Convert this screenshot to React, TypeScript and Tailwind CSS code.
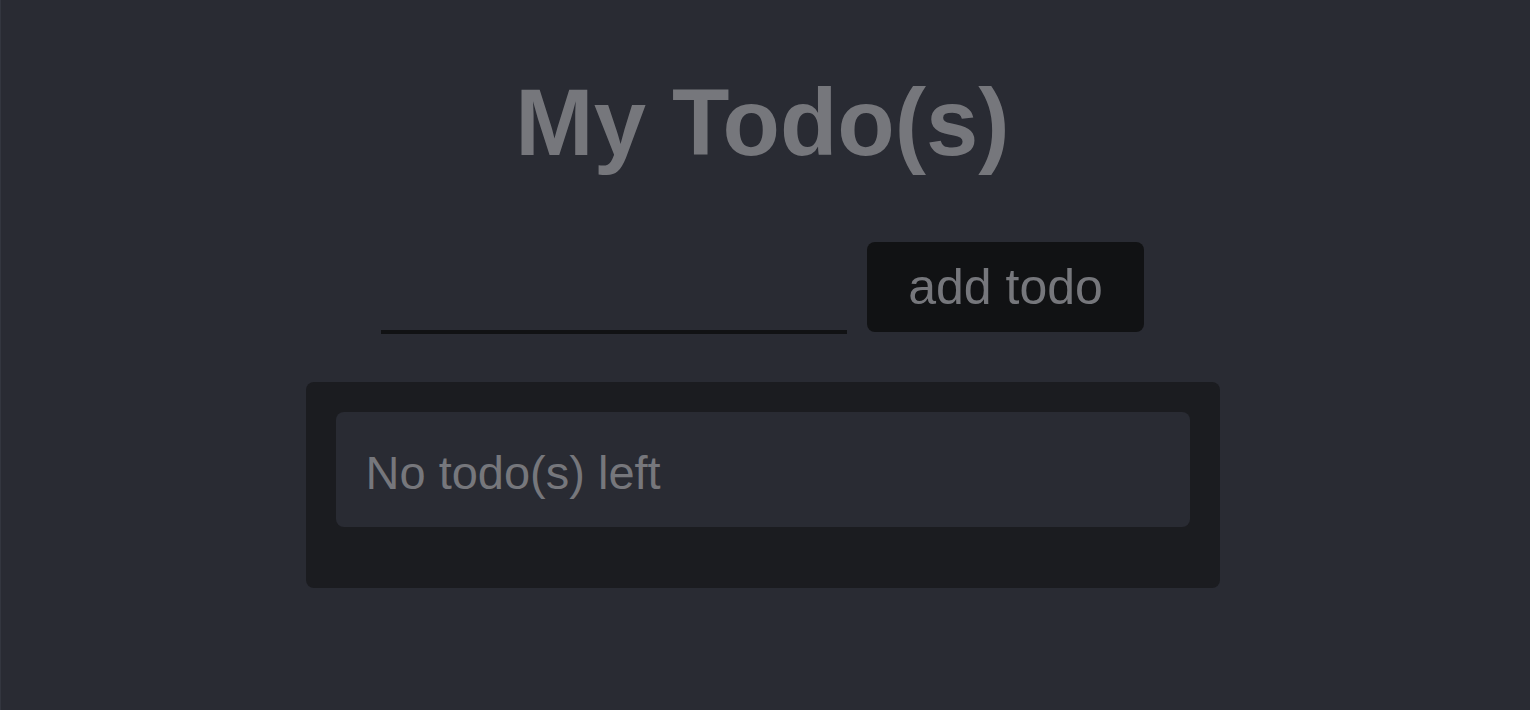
export default function App() {
  return (
    <div
      className="min-h-[710px] w-full bg-[#292b33] flex flex-col items-center border-l border-[#33363f] pr-[6px]"
      style={{ fontFamily: '"Liberation Sans", Arial, sans-serif' }}
    >
      <h1 className="mt-[76px] text-[94px] leading-none font-bold text-[#76777c]">My Todo(s)</h1>

      <div className="mt-[72px] flex items-end gap-5">
        <input
          type="text"
          className="w-[466px] h-[60px] mb-[-2px] bg-transparent border-b-4 border-[#111214] outline-none text-[40px] text-[#76777c]"
        />
        <button className="h-[90px] px-[41px] rounded-lg bg-[#111214] text-[50px] text-[#76777c]">
          add todo
        </button>
      </div>

      <div className="mt-[50px] w-[914px] rounded-lg bg-[#1b1c20] pt-[30px] px-[30px] pb-[61px]">
        <div className="h-[115px] rounded-lg bg-[#292b33] pl-[30px] pt-[34px] text-[47px] leading-[54px] text-[#76777c]">
          No todo(s) left
        </div>
      </div>
    </div>
  );
}
